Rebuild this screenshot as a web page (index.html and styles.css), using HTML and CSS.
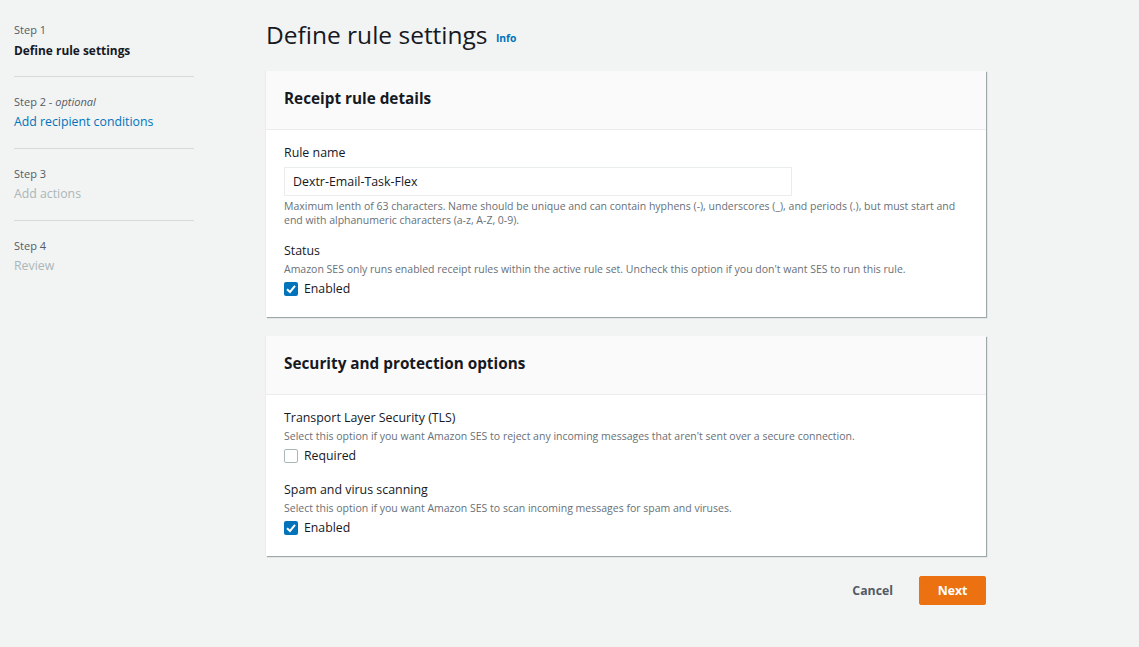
FILE: index.html
```html
<!DOCTYPE html>
<html>
<head>
<meta charset="utf-8">
<link rel="stylesheet" href="styles.css">
</head>
<body>
<div class="page">
  <nav class="steps">
    <div class="step">
      <div class="step-num">Step 1</div>
      <div class="step-title current">Define rule settings</div>
    </div>
    <div class="step">
      <div class="step-num">Step 2 - <i>optional</i></div>
      <div class="step-title link">Add recipient conditions</div>
    </div>
    <div class="step">
      <div class="step-num">Step 3</div>
      <div class="step-title disabled">Add actions</div>
    </div>
    <div class="step last">
      <div class="step-num">Step 4</div>
      <div class="step-title disabled">Review</div>
    </div>
  </nav>
  <main class="main">
    <h1 class="title">Define rule settings <a class="info">Info</a></h1>
    <section class="card">
      <div class="card-head">Receipt rule details</div>
      <div class="card-body">
        <div class="field">
          <div class="label">Rule name</div>
          <div class="input">Dextr-Email-Task-Flex</div>
          <div class="hint">Maximum lenth of 63 characters. Name should be unique and can contain hyphens (-), underscores (_), and periods (.), but must start and end with alphanumeric characters (a-z, A-Z, 0-9).</div>
        </div>
        <div class="field">
          <div class="label">Status</div>
          <div class="desc">Amazon SES only runs enabled receipt rules within the active rule set. Uncheck this option if you don't want SES to run this rule.</div>
          <label class="check"><span class="box on"><svg viewBox="0 0 14 14" width="14" height="14"><path d="M3 7.2 L6 10 L11 3.8" fill="none" stroke="#fff" stroke-width="2"/></svg></span>Enabled</label>
        </div>
      </div>
    </section>
    <section class="card">
      <div class="card-head">Security and protection options</div>
      <div class="card-body">
        <div class="field">
          <div class="label">Transport Layer Security (TLS)</div>
          <div class="desc">Select this option if you want Amazon SES to reject any incoming messages that aren't sent over a secure connection.</div>
          <label class="check"><span class="box"></span>Required</label>
        </div>
        <div class="field">
          <div class="label">Spam and virus scanning</div>
          <div class="desc">Select this option if you want Amazon SES to scan incoming messages for spam and viruses.</div>
          <label class="check"><span class="box on"><svg viewBox="0 0 14 14" width="14" height="14"><path d="M3 7.2 L6 10 L11 3.8" fill="none" stroke="#fff" stroke-width="2"/></svg></span>Enabled</label>
        </div>
      </div>
    </section>
    <div class="actions">
      <button class="btn-cancel">Cancel</button>
      <button class="btn-next">Next</button>
    </div>
  </main>
</div>
</body>
</html>
```
FILE: styles.css
```css
html, body {
  margin: 0;
  padding: 0;
  background: #f2f3f3;
  font-family: "Open Sans", "Noto Sans", sans-serif;
  color: #16191f;
}
.page {
  display: flex;
  padding: 0 0 0 14px;
}
.steps {
  width: 180px;
  padding-top: 22px;
  flex: none;
}
.step {
  padding-bottom: 17px;
  border-bottom: 1px solid #d5dbdb;
  margin-bottom: 17px;
}
.step.last {
  border-bottom: none;
}
.step-num {
  font-size: 11px;
  line-height: 16px;
  color: #545b64;
  margin-bottom: 3px;
}
.step-title {
  font-size: 12.3px;
  line-height: 18px;
}
.step-title.current { font-weight: 700; color: #16191f; font-size: 11.9px; }
.step-title.link { color: #0073bb; }
.step-title.disabled { color: #aab7b8; }

.main {
  margin-left: 72px;
  width: 720px;
  padding-top: 18px;
}
.title {
  margin: 0 0 16px 0;
  font-size: 24.5px;
  font-weight: 400;
  line-height: 34px;
  color: #16191f;
}
.info {
  font-size: 10.3px;
  font-weight: 700;
  color: #0073bb;
  vertical-align: 2px;
  margin-left: 2px;
}
.card {
  background: #fff;
  box-shadow: 1px 1px 1px 0 rgba(0,28,36,0.35), -1px 0 0 0 #eaeded;
  margin-bottom: 19px;
}
.card-head {
  background: #fafafa;
  border-bottom: 1px solid #eaeded;
  padding: 16px 18px 20px;
  line-height: 22px;
  font-size: 15.3px;
  font-weight: 700;
}
.card-body {
  padding: 13px 18px 18px;
}
.field { margin-bottom: 14px; }
.field:last-child { margin-bottom: 0; }
.label {
  font-size: 12.4px;
  line-height: 20px;
  margin-bottom: 1px;
}
.input {
  width: 490px;
  height: 27px;
  border: 1px solid #eaeded;
  padding: 0 8px;
  font-size: 12.4px;
  line-height: 27px;
  margin-top: 4px;
  margin-bottom: 3px;
}
.hint, .desc {
  font-size: 10.5px;
  line-height: 14px;
  color: #687078;
}
.desc { margin-bottom: 3px; }
.check {
  display: flex;
  align-items: center;
  font-size: 12.3px;
  line-height: 20px;
}
.box {
  width: 12px;
  height: 12px;
  border: 1px solid #aab7b8;
  border-radius: 2px;
  margin-right: 6px;
  display: inline-flex;
  background: #fff;
}
.box.on {
  width: 14px;
  height: 14px;
  border: none;
  background: #0073bb;
}
.actions {
  display: flex;
  justify-content: flex-end;
  align-items: center;
  margin-top: 20px;
}
.btn-cancel {
  background: none;
  border: none;
  font-family: inherit;
  font-size: 12.3px;
  font-weight: 700;
  color: #545b64;
  padding: 0 20px;
  height: 28px;
  margin-right: 6px;
}
.btn-next {
  background: #ec7211;
  border: 1px solid #ec7211;
  border-radius: 2px;
  color: #fff;
  font-family: inherit;
  font-size: 12.3px;
  font-weight: 700;
  height: 29px;
  width: 67px;
  padding: 0;
}
```
